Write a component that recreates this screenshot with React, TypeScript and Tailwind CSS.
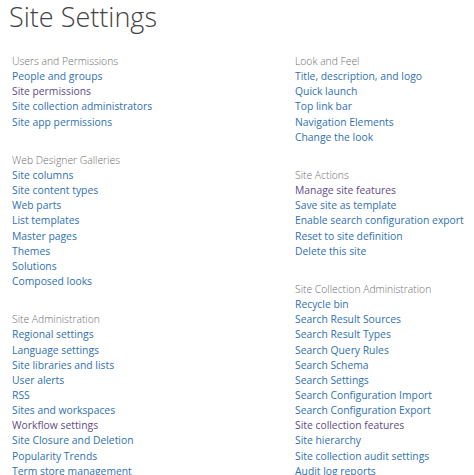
const sections = {
  left: [
    {
      title: "Users and Permissions",
      links: [
        { label: "People and groups" },
        { label: "Site permissions", visited: true },
        { label: "Site collection administrators" },
        { label: "Site app permissions" },
      ],
    },
    {
      title: "Web Designer Galleries",
      links: [
        { label: "Site columns" },
        { label: "Site content types" },
        { label: "Web parts" },
        { label: "List templates" },
        { label: "Master pages" },
        { label: "Themes" },
        { label: "Solutions" },
        { label: "Composed looks" },
      ],
    },
    {
      title: "Site Administration",
      links: [
        { label: "Regional settings" },
        { label: "Language settings" },
        { label: "Site libraries and lists" },
        { label: "User alerts" },
        { label: "RSS" },
        { label: "Sites and workspaces" },
        { label: "Workflow settings", visited: true },
        { label: "Site Closure and Deletion" },
        { label: "Popularity Trends" },
        { label: "Term store management" },
      ],
    },
  ],
  right: [
    {
      title: "Look and Feel",
      links: [
        { label: "Title, description, and logo" },
        { label: "Quick launch" },
        { label: "Top link bar" },
        { label: "Navigation Elements" },
        { label: "Change the look" },
      ],
    },
    {
      title: "Site Actions",
      links: [
        { label: "Manage site features", visited: true },
        { label: "Save site as template" },
        { label: "Enable search configuration export" },
        { label: "Reset to site definition" },
        { label: "Delete this site" },
      ],
    },
    {
      title: "Site Collection Administration",
      links: [
        { label: "Recycle bin" },
        { label: "Search Result Sources" },
        { label: "Search Result Types" },
        { label: "Search Query Rules" },
        { label: "Search Schema" },
        { label: "Search Settings" },
        { label: "Search Configuration Import" },
        { label: "Search Configuration Export" },
        { label: "Site collection features", visited: true },
        { label: "Site hierarchy" },
        { label: "Site collection audit settings" },
        { label: "Audit log reports" },
      ],
    },
  ],
};

type Section = { title: string; links: { label: string; visited?: boolean }[] };

function SettingsGroup({ section }: { section: Section }) {
  return (
    <div className="flex flex-col">
      <h3 className="text-[#707070] font-light">{section.title}</h3>
      {section.links.map((link) => (
        <a
          key={link.label}
          href="#"
          className={link.visited ? "text-[#634b86]" : "text-[#3071b0]"}
        >
          {link.label}
        </a>
      ))}
    </div>
  );
}

export default function App() {
  return (
    <div
      className="w-[474px] h-[475px] overflow-hidden bg-white"
      style={{ fontFamily: '"Open Sans", "Noto Sans", sans-serif' }}
    >
      <h1 className="pl-[9px] text-[27px] leading-[34px] font-light text-[#444444]">
        Site Settings
      </h1>
      <div className="grid grid-cols-[283px_1fr] pl-[12px] pt-[20px] text-[10.35px] leading-[15.15px]">
        <div className="flex flex-col gap-[23px]">
          {sections.left.map((s) => (
            <SettingsGroup key={s.title} section={s} />
          ))}
        </div>
        <div className="flex flex-col gap-[23px]">
          {sections.right.map((s) => (
            <SettingsGroup key={s.title} section={s} />
          ))}
        </div>
      </div>
    </div>
  );
}
